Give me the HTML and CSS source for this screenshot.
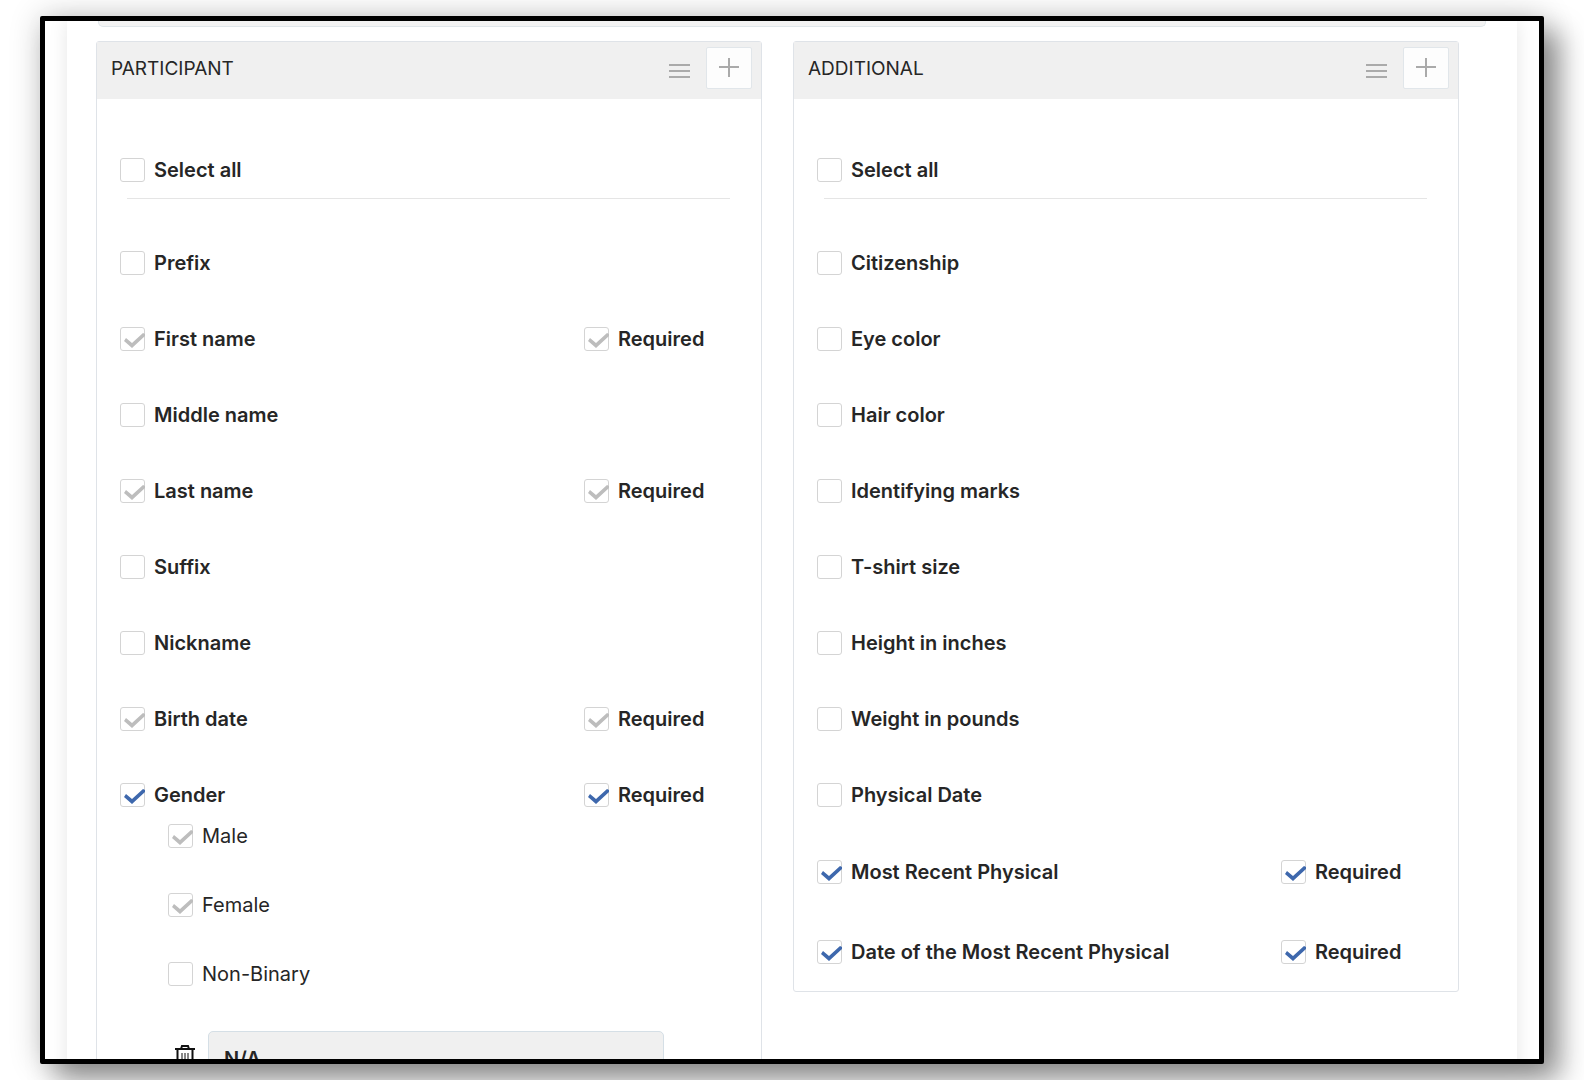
FILE: index.html
```html
<!DOCTYPE html>
<html lang="en">
<head>
    <meta charset="UTF-8">
    <title>Participant fields</title>
    <link rel="stylesheet" href="styles.css">
</head>
<body>
    <div class="frame">
        <main class="page">
            <div class="previous-box"></div>

            <div class="panels">
                <section class="panel">
                    <header class="panel-header">
                        <h2>PARTICIPANT</h2>
                        <button type="button" class="drag-btn" aria-label="Reorder participant">
                            <svg width="21" height="14" viewBox="0 0 21 14"><path d="M0 1h21M0 7h21M0 13h21"/></svg>
                        </button>
                        <button type="button" class="add-btn" aria-label="Add participant field">
                            <svg width="20" height="20" viewBox="0 0 20 20"><path d="M10 0v19M0 9h20"/></svg>
                        </button>
                    </header>
                    <div class="panel-body">
                        <div class="select-all">
                            <label class="check"><input type="checkbox">Select all</label>
                        </div>
                        <ul class="fields">
                            <li class="field"><label class="check"><input type="checkbox">Prefix</label></li>
                            <li class="field">
                                <label class="check"><input type="checkbox" checked disabled>First name</label>
                                <label class="check"><input type="checkbox" checked disabled>Required</label>
                            </li>
                            <li class="field"><label class="check"><input type="checkbox">Middle name</label></li>
                            <li class="field">
                                <label class="check"><input type="checkbox" checked disabled>Last name</label>
                                <label class="check"><input type="checkbox" checked disabled>Required</label>
                            </li>
                            <li class="field"><label class="check"><input type="checkbox">Suffix</label></li>
                            <li class="field"><label class="check"><input type="checkbox">Nickname</label></li>
                            <li class="field">
                                <label class="check"><input type="checkbox" checked disabled>Birth date</label>
                                <label class="check"><input type="checkbox" checked disabled>Required</label>
                            </li>
                            <li class="field">
                                <label class="check"><input type="checkbox" checked>Gender</label>
                                <label class="check"><input type="checkbox" checked>Required</label>
                            </li>
                        </ul>
                        <!-- gender options -->
                        <div class="options">
                            <label class="check light"><input type="checkbox" checked disabled>Male</label>
                            <label class="check light"><input type="checkbox" checked disabled>Female</label>
                            <label class="check light"><input type="checkbox">Non-Binary</label>
                            <div class="custom-option">
                                <button type="button" class="delete-btn" aria-label="Delete option">
                                    <svg width="20" height="28" viewBox="0 0 20 28"><path d="M0 4h20M6 4l1-3h6l1 3M2.500 5v19q0 2 2 2h11q2 0 2-2V5"/><path class="thin" d="M7 8v15M10 8v15M13 8v15"/></svg>
                                </button>
                                <input type="text" class="option-input" value="N/A" aria-label="Option name">
                            </div>
                        </div>
                    </div>
                </section>

                <section class="panel">
                    <header class="panel-header">
                        <h2>ADDITIONAL</h2>
                        <button type="button" class="drag-btn" aria-label="Reorder additional">
                            <svg width="21" height="14" viewBox="0 0 21 14"><path d="M0 1h21M0 7h21M0 13h21"/></svg>
                        </button>
                        <button type="button" class="add-btn" aria-label="Add additional field">
                            <svg width="20" height="20" viewBox="0 0 20 20"><path d="M10 0v19M0 9h20"/></svg>
                        </button>
                    </header>
                    <div class="panel-body">
                        <div class="select-all">
                            <label class="check"><input type="checkbox">Select all</label>
                        </div>
                        <ul class="fields">
                            <li class="field"><label class="check"><input type="checkbox">Citizenship</label></li>
                            <li class="field"><label class="check"><input type="checkbox">Eye color</label></li>
                            <li class="field"><label class="check"><input type="checkbox">Hair color</label></li>
                            <li class="field"><label class="check"><input type="checkbox">Identifying marks</label></li>
                            <li class="field"><label class="check"><input type="checkbox">T-shirt size</label></li>
                            <li class="field"><label class="check"><input type="checkbox">Height in inches</label></li>
                            <li class="field"><label class="check"><input type="checkbox">Weight in pounds</label></li>
                            <li class="field"><label class="check"><input type="checkbox">Physical Date</label></li>
                            <li class="field custom">
                                <label class="check"><input type="checkbox" checked>Most Recent Physical</label>
                                <label class="check"><input type="checkbox" checked>Required</label>
                            </li>
                            <li class="field custom">
                                <label class="check"><input type="checkbox" checked>Date of the Most Recent Physical</label>
                                <label class="check"><input type="checkbox" checked>Required</label>
                            </li>
                        </ul>
                    </div>
                </section>
            </div>
        </main>
    </div>
</body>
</html>
```
FILE: styles.css
```css
* {
    box-sizing: border-box;
}

body {
    font-family: Inter, "Open Sans", sans-serif;
    font-size: 20px;
    color: #262626;
    background: #fff;
    margin: 0;
    padding: 16px 40px;
    height: 100vh;
    overflow: hidden;
}

.frame {
    height: 100%;
    border: 5px solid #000;
    border-radius: 2px;
    padding: 0 22px;
    background: #fff;
    overflow: hidden;
    box-shadow: 16px 16px 28px rgba(0,0,0,0.4), 0 0 32px rgba(0,0,0,0.2);
}

.page {
    min-height: 100%;
    padding: 0 58px 0 29px;
    background: #fff;
    box-shadow: 0 0 18px rgba(0,0,0,0.1);
}

/* bottom edge of the box above, scrolled out of view */
.previous-box {
    height: 6px;
    margin: 0 -27px 14px 2px;
    background: #f3f3f3;
    border: 1px solid #dfe6ea;
    border-top: 0;
    border-radius: 0 0 5px 5px;
}

.panels {
    display: grid;
    grid-template-columns: 1fr 1fr;
    gap: 31px;
    align-items: start;
}

.panel {
    border: 1px solid #dfe3e8;
    border-radius: 3px;
}

.panel-header {
    display: flex;
    align-items: flex-start;
    height: 57px;
    padding: 5px 9px 0 14px;
    background: #f0f0f0;
}

.panel-header h2 {
    flex: 1;
    margin: 0;
    font-size: 19px;
    font-weight: 400;
    line-height: 44px;
}

button {
    padding: 0;
    border: 0;
    background: none;
    cursor: pointer;
}

svg {
    display: block;
    fill: none;
    stroke: #aaa;
    stroke-width: 2;
}

.drag-btn {
    margin: 17px 16px 0 0;
}

.add-btn {
    display: flex;
    justify-content: center;
    width: 46px;
    height: 42px;
    padding-top: 10px;
    background: #fdfdfd;
    border: 1px solid #e1e6ea;
    border-radius: 2px;
}

.panel-body {
    padding: 59px 0 27px 23px;
}

.check {
    display: flex;
    align-items: center;
    gap: 9px;
    height: 24px;
    font-weight: 600;
}

.check.light {
    font-weight: 400;
}

.check input {
    appearance: none;
    flex: none;
    width: 25px;
    height: 24px;
    margin: 0;
    padding: 5px 0 0 3px;
    background: #fff;
    border: 1px solid #d4d4d4;
    border-radius: 3px;
}

.check input:checked::before {
    content: "";
    display: block;
    width: 21px;
    height: 15px;
    background: #3e68ad;
    clip-path: polygon(0 8px, 2px 5px, 8px 10px, 19px 0, 21px 1px, 21px 3px, 8px 15px);
}

.check input:disabled::before {
    background: #bdbdbd;
}

.select-all {
    margin-bottom: 52px;
}

.select-all::after {
    content: "";
    display: block;
    margin: 16px 31px 0 7px;
    border-top: 1px solid #e5e5e5;
}

.fields {
    display: flex;
    flex-direction: column;
    gap: 52px;
    margin: 0;
    padding: 0;
    list-style: none;
}

.field {
    display: grid;
    grid-template-columns: 1fr 177px;
}

.field.custom {
    margin-top: 1px;
}

.field.custom + .custom {
    margin-top: 4px;
}

.options {
    display: flex;
    flex-direction: column;
    gap: 45px;
    margin-top: 17px;
    padding-left: 48px;
}

.custom-option {
    display: flex;
    align-items: center;
    gap: 13px;
    padding: 0 97px 0 7px;
}

.delete-btn svg {
    stroke: #111;
}

.delete-btn .thin {
    stroke-width: 1;
}

.option-input {
    flex: 1;
    height: 56px;
    padding: 0 15px;
    font: inherit;
    font-weight: 600;
    color: #262626;
    background: #f0f0f0;
    border: 1px solid #d5dfe6;
    border-radius: 5px;
}
```
